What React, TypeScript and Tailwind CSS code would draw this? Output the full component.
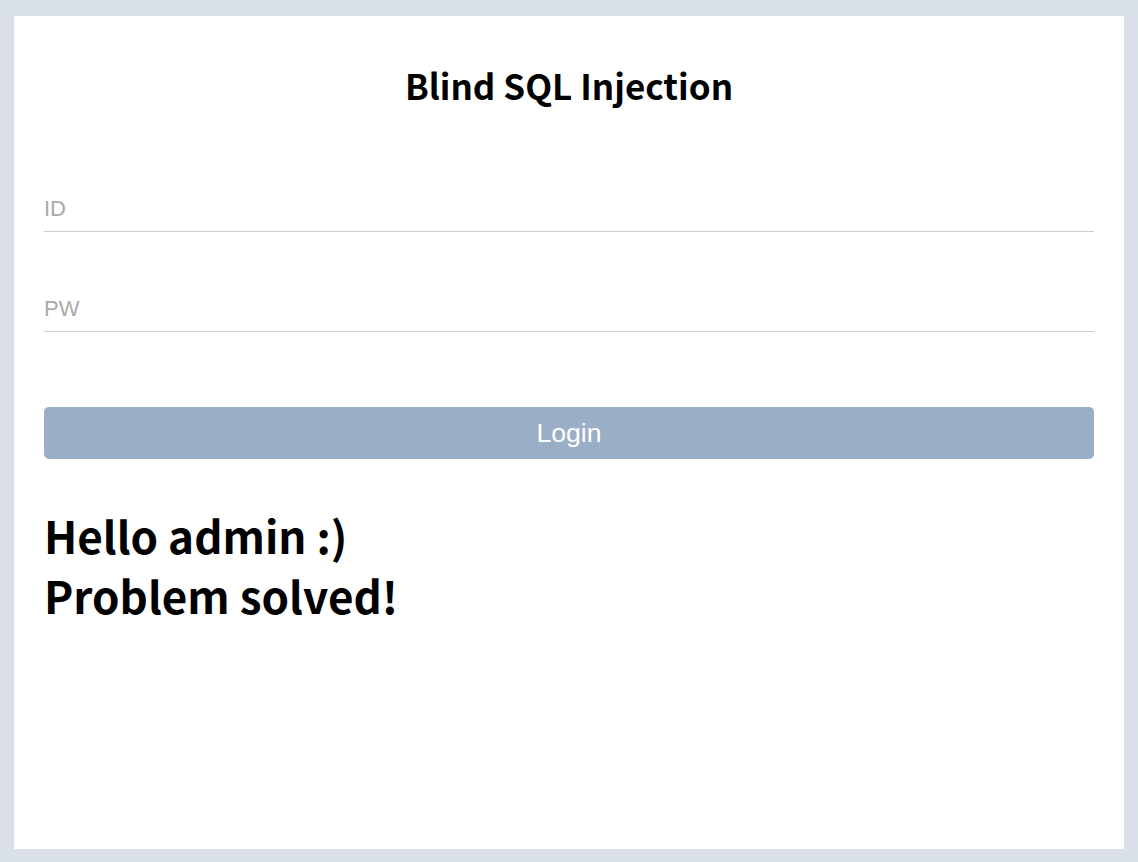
import React from 'react';

const App: React.FC = () => {
  return (
    <div className="min-h-screen bg-[#d9e0e7] pt-[16px] px-[14px] pb-[13px]">
      <div className="h-[833px] bg-white px-[30px] pt-[47px]">
        <h1 className="text-center text-[35px] leading-[44px] font-bold text-black [font-family:'Noto_Sans_CJK_KR','Open_Sans',sans-serif]">
          Blind SQL Injection
        </h1>

        <form className="mt-[85px] flex flex-col" onSubmit={(e) => e.preventDefault()}>
          <input
            type="text"
            placeholder="ID"
            className="h-[40px] w-full border-b border-[#cccccc] pb-[6px] text-[22px] outline-none placeholder:text-[#a9a9a9] [font-family:'Liberation_Sans',Arial,sans-serif]"
          />
          <input
            type="password"
            placeholder="PW"
            className="mt-[60px] h-[40px] w-full border-b border-[#cccccc] pb-[6px] text-[22px] outline-none placeholder:text-[#a9a9a9] [font-family:'Liberation_Sans',Arial,sans-serif]"
          />
          <button
            type="submit"
            className="mt-[75px] h-[52px] w-full rounded-[5px] bg-[#9aaec8] text-[26.67px] text-white [font-family:'Liberation_Sans',Arial,sans-serif]"
          >
            Login
          </button>
        </form>

        <div className="mt-[46px] text-[44px] leading-[60px] font-bold text-black [font-family:'Noto_Sans_CJK_KR','Open_Sans',sans-serif]">
          <div>Hello admin :)</div>
          <div>Problem solved!</div>
        </div>
      </div>
    </div>
  );
};

export default App;
